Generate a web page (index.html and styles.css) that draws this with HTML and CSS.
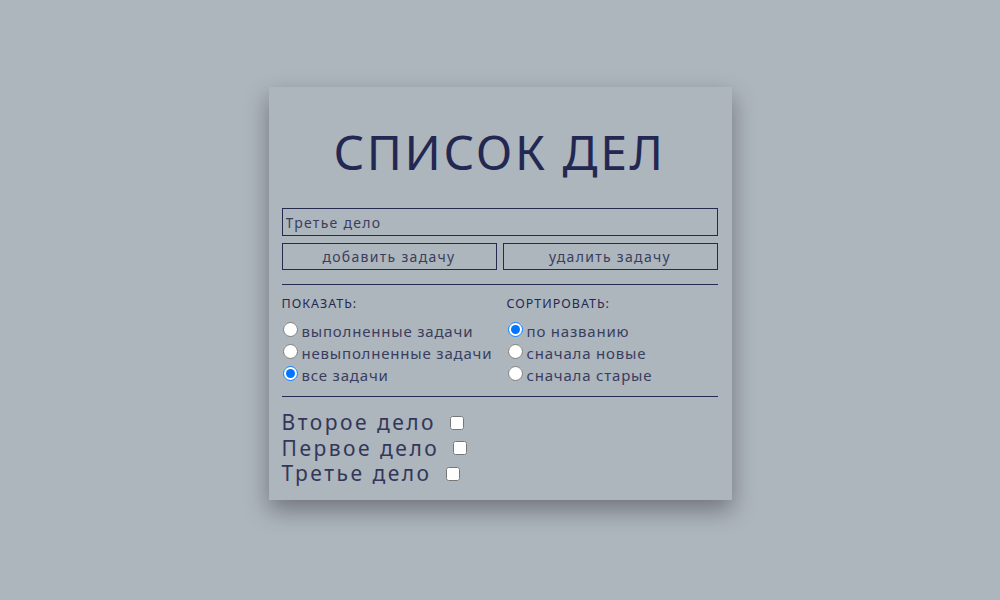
FILE: index.html
```html
<!DOCTYPE html>
<html lang="ru">
<head>
<meta charset="utf-8">
<title>Список дел</title>
<link rel="stylesheet" href="styles.css">
</head>
<body>
<main class="card">
  <h1 class="title">СПИСОК ДЕЛ</h1>
  <input class="task-input" type="text" value="Третье дело">
  <div class="buttons">
    <button class="btn">добавить задачу</button>
    <button class="btn">удалить задачу</button>
  </div>
  <hr class="sep">
  <div class="filters">
    <div class="group group-show">
      <div class="group-title">ПОКАЗАТЬ:</div>
      <label class="opt"><input type="radio" name="show">выполненные задачи</label>
      <label class="opt"><input type="radio" name="show">невыполненные задачи</label>
      <label class="opt"><input type="radio" name="show" checked>все задачи</label>
    </div>
    <div class="group">
      <div class="group-title">СОРТИРОВАТЬ:</div>
      <label class="opt"><input type="radio" name="sort" checked>по названию</label>
      <label class="opt"><input type="radio" name="sort">сначала новые</label>
      <label class="opt"><input type="radio" name="sort">сначала старые</label>
    </div>
  </div>
  <hr class="sep sep-tight">
  <ul class="tasks">
    <li class="task"><span class="task-name">Второе дело</span><input type="checkbox"></li>
    <li class="task"><span class="task-name">Первое дело</span><input type="checkbox"></li>
    <li class="task"><span class="task-name">Третье дело</span><input type="checkbox"></li>
  </ul>
</main>
</body>
</html>
```
FILE: styles.css
```css
* { box-sizing: border-box; }
html, body {
  margin: 0;
  padding: 0;
  background: #adb5bd;
  height: 100%;
}
body {
  font-family: "Noto Sans", "DejaVu Sans", sans-serif;
  color: #262a50;
  display: flex;
  justify-content: center;
  align-items: flex-start;
  padding-top: 87px;
}
.card {
  width: 463px;
  background: #adb5bd;
  box-shadow: 0 10px 22px rgba(0, 0, 0, 0.35);
  padding: 30px 14px 13px 13px;
  display: flex;
  flex-direction: column;
}
.title {
  margin: 0;
  font-size: 48px;
  font-weight: 400;
  text-align: center;
  line-height: 70px;
  letter-spacing: 2.6px;
  color: #232853;
  margin-bottom: 21px;
}
.task-input {
  height: 28px;
  border: 1px solid #262a50;
  background: transparent;
  font: inherit;
  font-size: 14px;
  letter-spacing: 1.3px;
  color: #3a3e5e;
  padding: 0 3px;
  outline: none;
}
.buttons {
  display: flex;
  gap: 6px;
  margin-top: 7px;
}
.btn {
  flex: 1;
  height: 27px;
  border: 1px solid #262a50;
  background: transparent;
  font: inherit;
  font-size: 14px;
  letter-spacing: 1.3px;
  color: #3a3e5e;
  padding: 0;
}
.sep {
  margin: 14px 0 0;
  border: 0;
  border-top: 1px solid #262a50;
  height: 0;
}
.sep-tight {
  margin-top: 10px;
}
.filters {
  display: flex;
  padding-top: 11px;
}
.group {
  display: flex;
  flex-direction: column;
  flex: 1 1 auto;
}
.group-show {
  flex: 0 0 225px;
}
.group-title {
  font-size: 12.5px;
  letter-spacing: 1px;
  line-height: 16px;
  margin-bottom: 8px;
}
.opt {
  display: flex;
  align-items: center;
  font-size: 15px;
  letter-spacing: 0.8px;
  line-height: 22px;
  color: #3a3e5e;
  height: 22px;
  white-space: nowrap;
}
.opt input {
  margin: 0 4px 4px 1px;
  width: 15px;
  height: 15px;
}
.tasks {
  list-style: none;
  margin: 13px 0 0;
  padding: 0;
}
.task {
  height: 25.5px;
  display: flex;
  align-items: center;
  gap: 14px;
}
.task-name {
  font-size: 21px;
  letter-spacing: 2.5px;
  line-height: 25px;
  color: #33375a;
}
.task input {
  margin: 0;
  width: 14px;
  height: 14px;
}
```
